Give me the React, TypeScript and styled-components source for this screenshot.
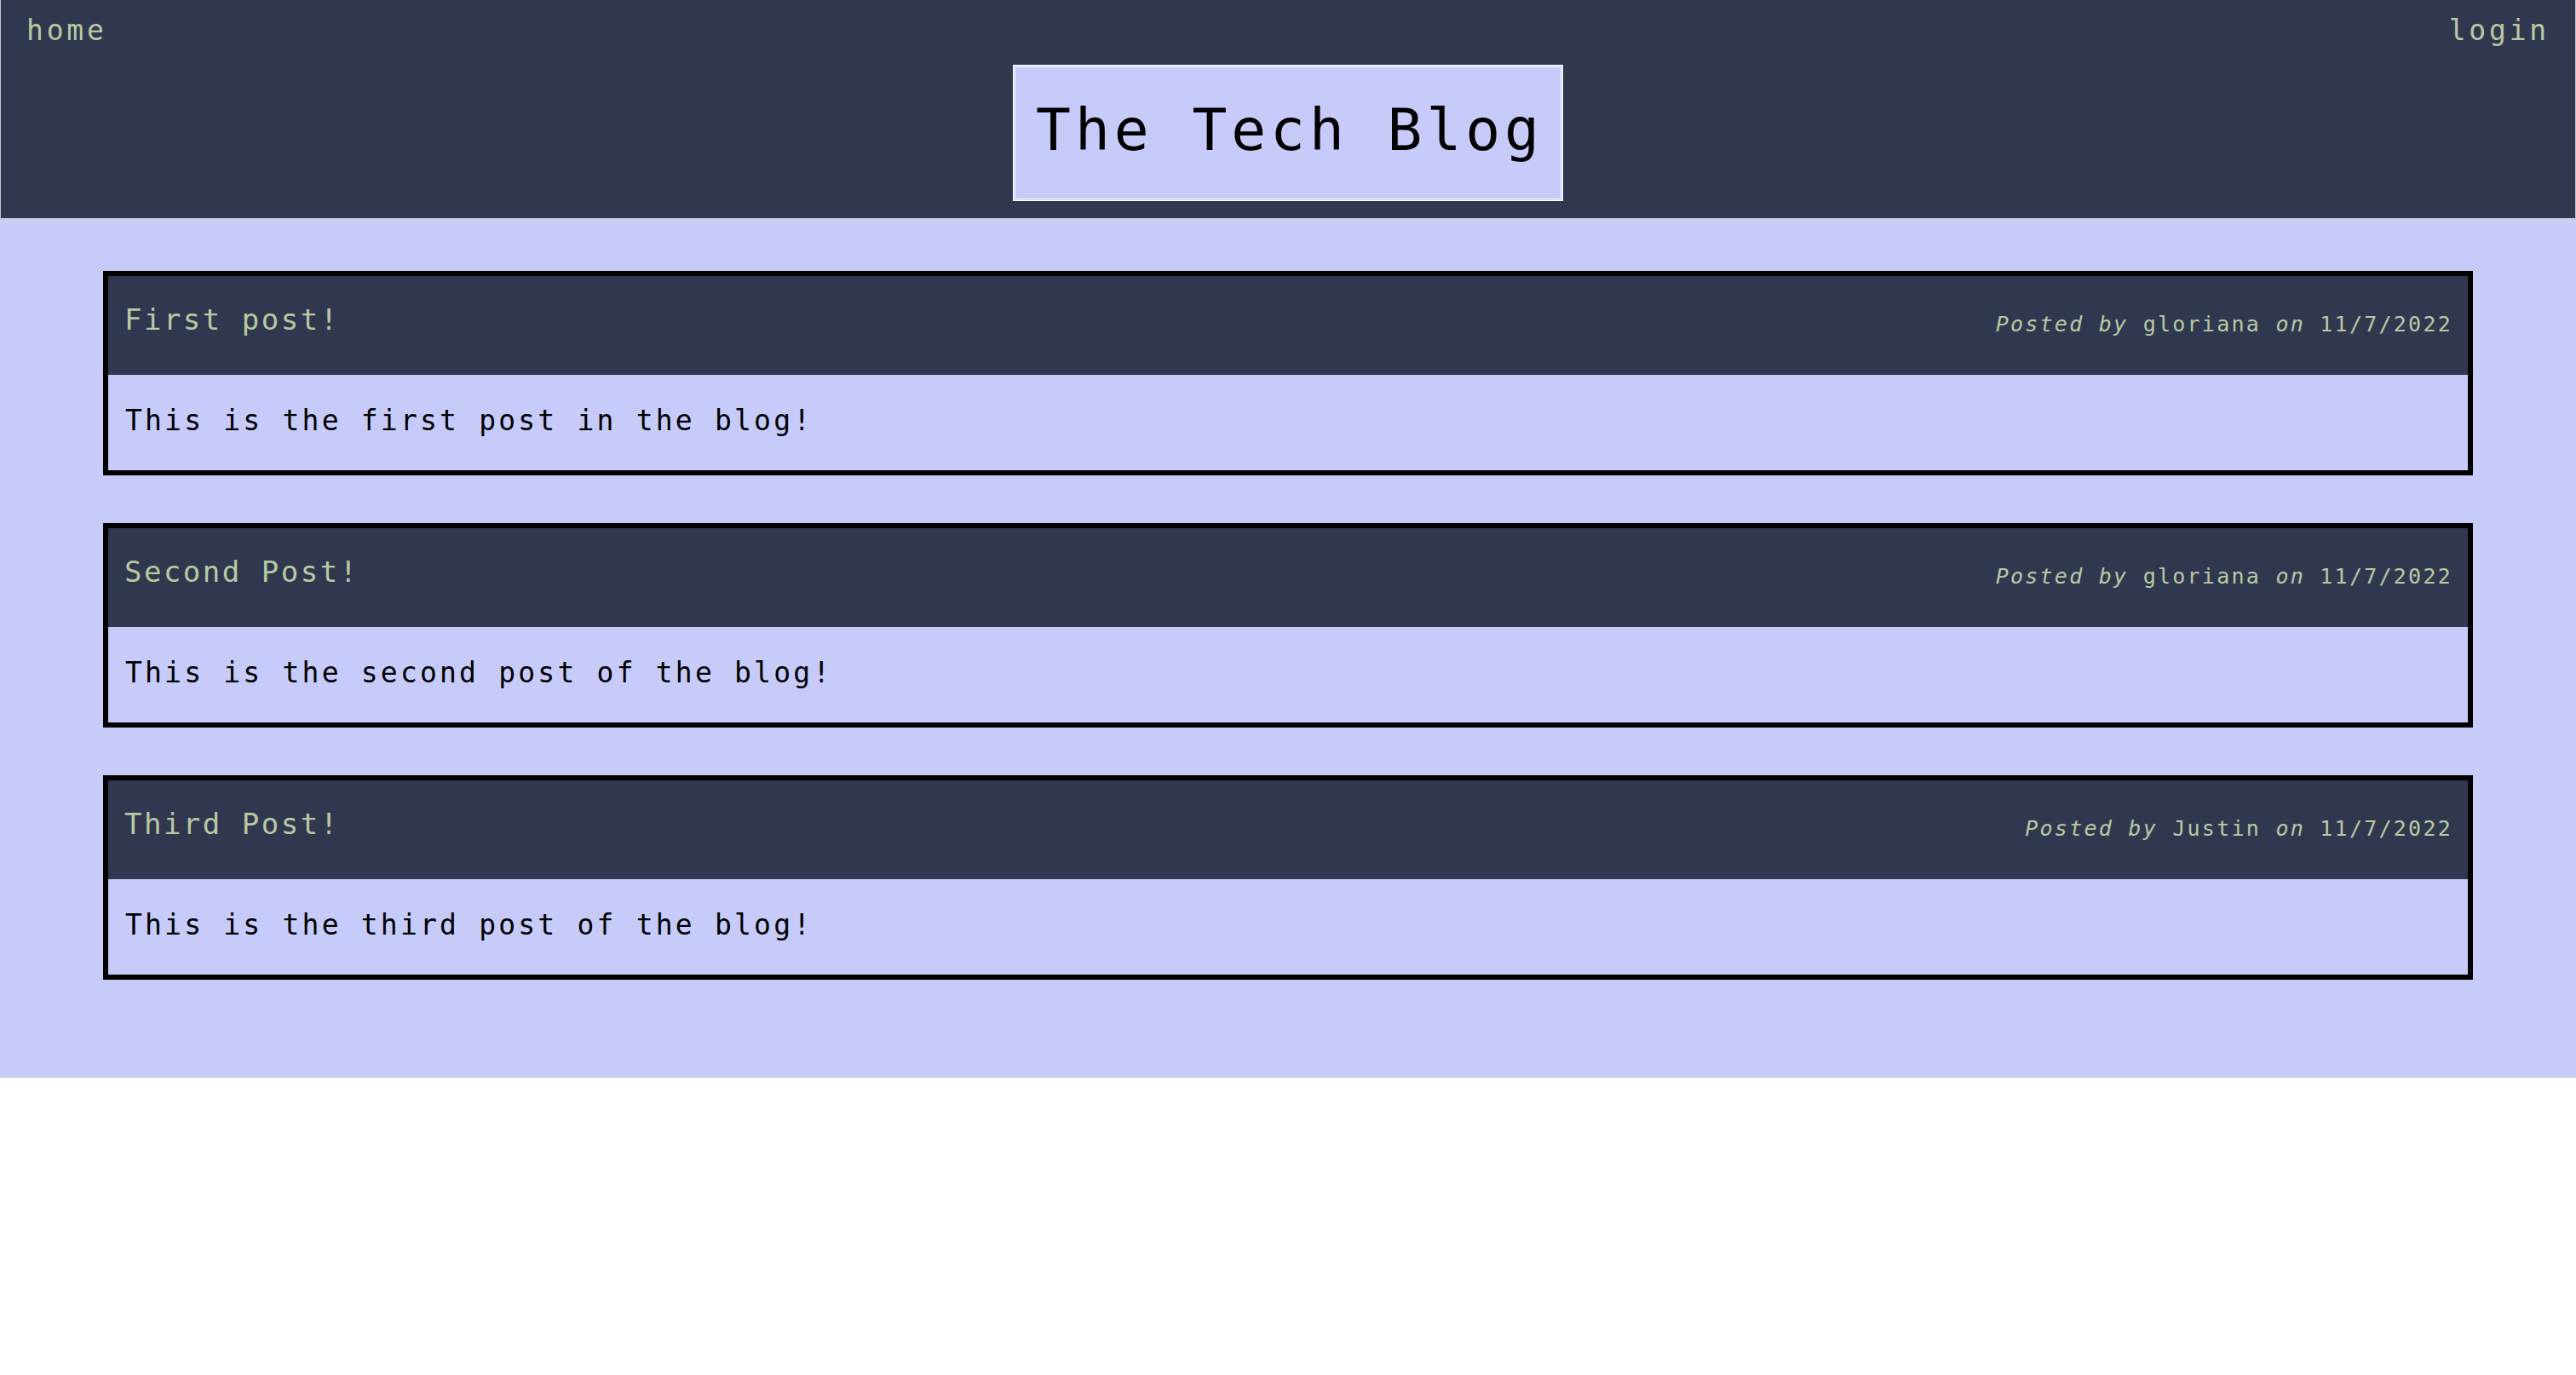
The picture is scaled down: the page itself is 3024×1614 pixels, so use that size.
import React from "react";
import styled, { createGlobalStyle } from "styled-components";

const GlobalStyle = createGlobalStyle`
  html, body {
    margin: 0;
    padding: 0;
    background: #ffffff;
  }
  body {
    font-family: "DejaVu Sans Mono", "Liberation Mono", monospace;
  }
`;

const DARK = "#303850";
const LIGHT = "#c6cbfa";
const GREEN = "#b9c9a2";

const Header = styled.header`
  background: ${DARK};
  border: 1px solid #c4c4c4;
  border-top: none;
  padding: 17px 30px 20px;
  display: flex;
  flex-direction: column;
  align-items: center;
`;

const Nav = styled.nav`
  align-self: stretch;
  display: flex;
  justify-content: space-between;
  align-items: center;
  height: 38px;
`;

const NavLink = styled.a`
  color: ${GREEN};
  font-size: 33px;
  line-height: 38px;
  letter-spacing: 3.8px;
  text-decoration: none;
  cursor: pointer;
`;

const TitleBox = styled.div`
  margin-top: 21px;
  background: ${LIGHT};
  border: 3px double #ffffff;
  padding: 34px 22px 41px 26px;
  box-sizing: border-box;
  width: 646px;
  display: flex;
  justify-content: center;
`;

const SiteTitle = styled.h1`
  margin: 0;
  font-size: 68px;
  line-height: 79px;
  font-weight: normal;
  letter-spacing: 4.9px;
  color: #000000;
  white-space: nowrap;
`;

const Main = styled.main`
  background: ${LIGHT};
  padding: 61px 0 115px;
  display: flex;
  flex-direction: column;
  gap: 56px;
`;

const Card = styled.article`
  width: 92%;
  margin: 0 auto;
  border: 6px solid #000000;
  box-sizing: border-box;
`;

const CardHeader = styled.div`
  background: ${DARK};
  display: flex;
  justify-content: space-between;
  align-items: baseline;
  padding: 31px 18px 45px 19px;
`;

const PostTitle = styled.h2`
  margin: 0;
  font-size: 34px;
  line-height: 40px;
  font-weight: normal;
  letter-spacing: 2.5px;
  color: ${GREEN};
`;

const Meta = styled.p`
  margin: 0;
  font-size: 25px;
  line-height: 30px;
  letter-spacing: 2.25px;
  color: ${GREEN};
  transform: translateY(2px);
`;

const MetaWord = styled.em`
  font-style: italic;
`;

const CardBody = styled.div`
  background: ${LIGHT};
  padding: 35px 20px 39px;
`;

const BodyText = styled.p`
  margin: 0;
  font-size: 33px;
  line-height: 38px;
  letter-spacing: 3.2px;
  color: #000000;
`;

type Post = { title: string; author: string; date: string; body: string };

const posts: Post[] = [
  {
    title: "First post!",
    author: "gloriana",
    date: "11/7/2022",
    body: "This is the first post in the blog!",
  },
  {
    title: "Second Post!",
    author: "gloriana",
    date: "11/7/2022",
    body: "This is the second post of the blog!",
  },
  {
    title: "Third Post!",
    author: "Justin",
    date: "11/7/2022",
    body: "This is the third post of the blog!",
  },
];

export default function App() {
  return (
    <>
      <GlobalStyle />
      <Header>
        <Nav>
          <NavLink>home</NavLink>
          <NavLink>login</NavLink>
        </Nav>
        <TitleBox>
          <SiteTitle>The Tech Blog</SiteTitle>
        </TitleBox>
      </Header>
      <Main>
        {posts.map((p) => (
          <Card key={p.title}>
            <CardHeader>
              <PostTitle>{p.title}</PostTitle>
              <Meta>
                <MetaWord>Posted by</MetaWord> {p.author} <MetaWord>on</MetaWord> {p.date}
              </Meta>
            </CardHeader>
            <CardBody>
              <BodyText>{p.body}</BodyText>
            </CardBody>
          </Card>
        ))}
      </Main>
    </>
  );
}
